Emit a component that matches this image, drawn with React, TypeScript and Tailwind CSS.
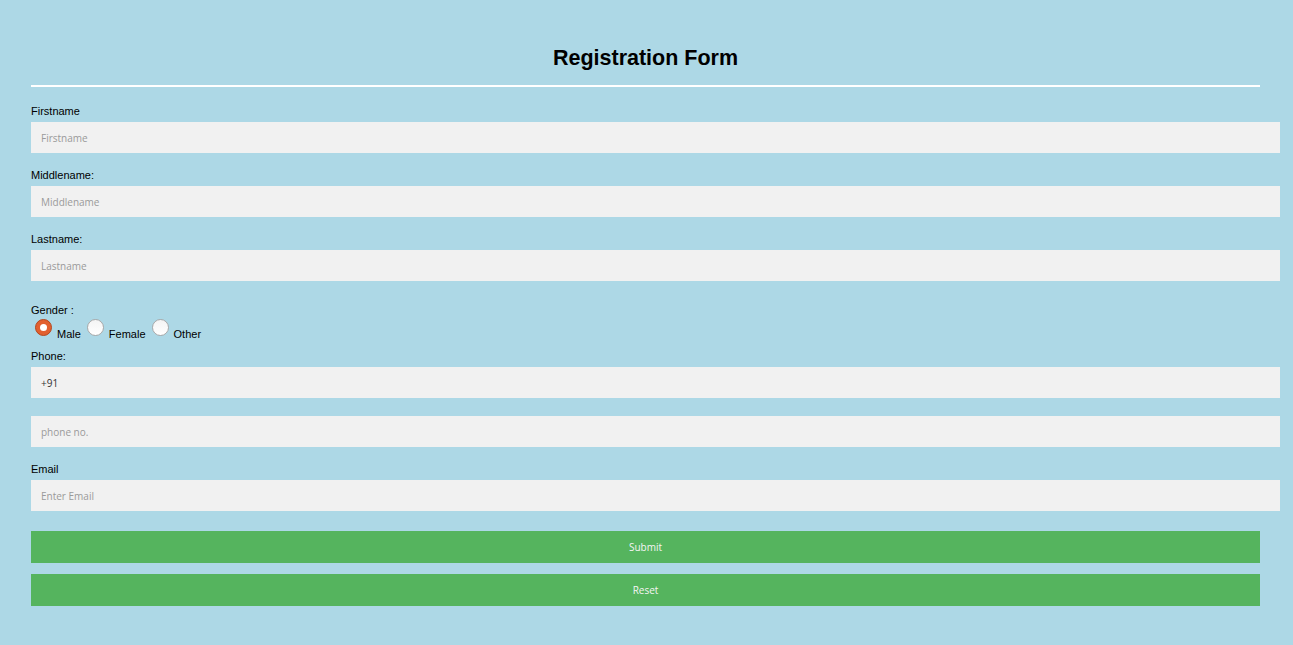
const Field = ({ label, placeholder, value }: { label?: string; placeholder?: string; value?: string }) => (
    <div className="flex flex-col">
        {label && <label className="block text-[11px] leading-[14px] text-black mb-[4px]">{label}</label>}
        <input
            className="w-[calc(100%+20px)] h-[31px] bg-[#f1f1f1] px-[10px] text-[10px] text-[#333] placeholder:text-[#9a9a9a] outline-none font-['Open_Sans',sans-serif]"
            placeholder={placeholder}
            defaultValue={value}
        />
    </div>
)

const Radio = ({ checked }: { checked?: boolean }) => (
    <span
        className={`inline-flex items-center justify-center w-[17px] h-[17px] rounded-full border ml-[4px] mr-[5px] ${
            checked
                ? "bg-[#e2602f] border-[#b5471e]"
                : "bg-gradient-to-b from-[#f4f4f4] to-white border-[#a9a9a9]"
        }`}
    >
        {checked && <span className="w-[7px] h-[7px] rounded-full bg-white" />}
    </span>
)

export default function App() {
    return (
        <div className="min-h-[658px] bg-[#ffc0cb] font-['Liberation_Sans',Arial,sans-serif]">
            <div className="bg-[#add8e6] pl-[31px] pr-[33px] pt-[45px] pb-[39px]">
                <h1 className="text-center text-[21.5px] leading-[26px] font-bold text-black">Registration Form</h1>
                <hr className="border-0 h-[2px] bg-white mt-[14px] mb-[17px]" />

                <div className="flex flex-col gap-[15px]">
                    <Field label="Firstname" placeholder="Firstname" />
                    <Field label="Middlename:" placeholder="Middlename" />
                    <Field label="Lastname:" placeholder="Lastname" />
                </div>

                <div className="mt-[22px] text-[11px] leading-[14px]">Gender :</div>
                <div className="flex items-start h-[31px] pt-[2px] text-[11px]">
                    <Radio checked />
                    <span className="mt-[8px] leading-[14px] mr-[2px]">Male</span>
                    <Radio />
                    <span className="mt-[8px] leading-[14px] mr-[2px]">Female</span>
                    <Radio />
                    <span className="mt-[8px] leading-[14px]">Other</span>
                </div>

                <div className="mt-[1px] flex flex-col">
                    <Field label="Phone:" value="+91" />
                    <div className="mt-[18px]">
                        <Field placeholder="phone no." />
                    </div>
                    <div className="mt-[15px]">
                        <Field label="Email" placeholder="Enter Email" />
                    </div>
                </div>

                <div className="mt-[20px] flex flex-col gap-[11px]">
                    <button className="h-[32px] w-full bg-[#55b45e] text-[#f4f4f4] text-[10px] font-['Open_Sans',sans-serif]">Submit</button>
                    <button className="h-[32px] w-full bg-[#55b45e] text-[#f4f4f4] text-[10px] font-['Open_Sans',sans-serif]">Reset</button>
                </div>
            </div>
        </div>
    )
}
